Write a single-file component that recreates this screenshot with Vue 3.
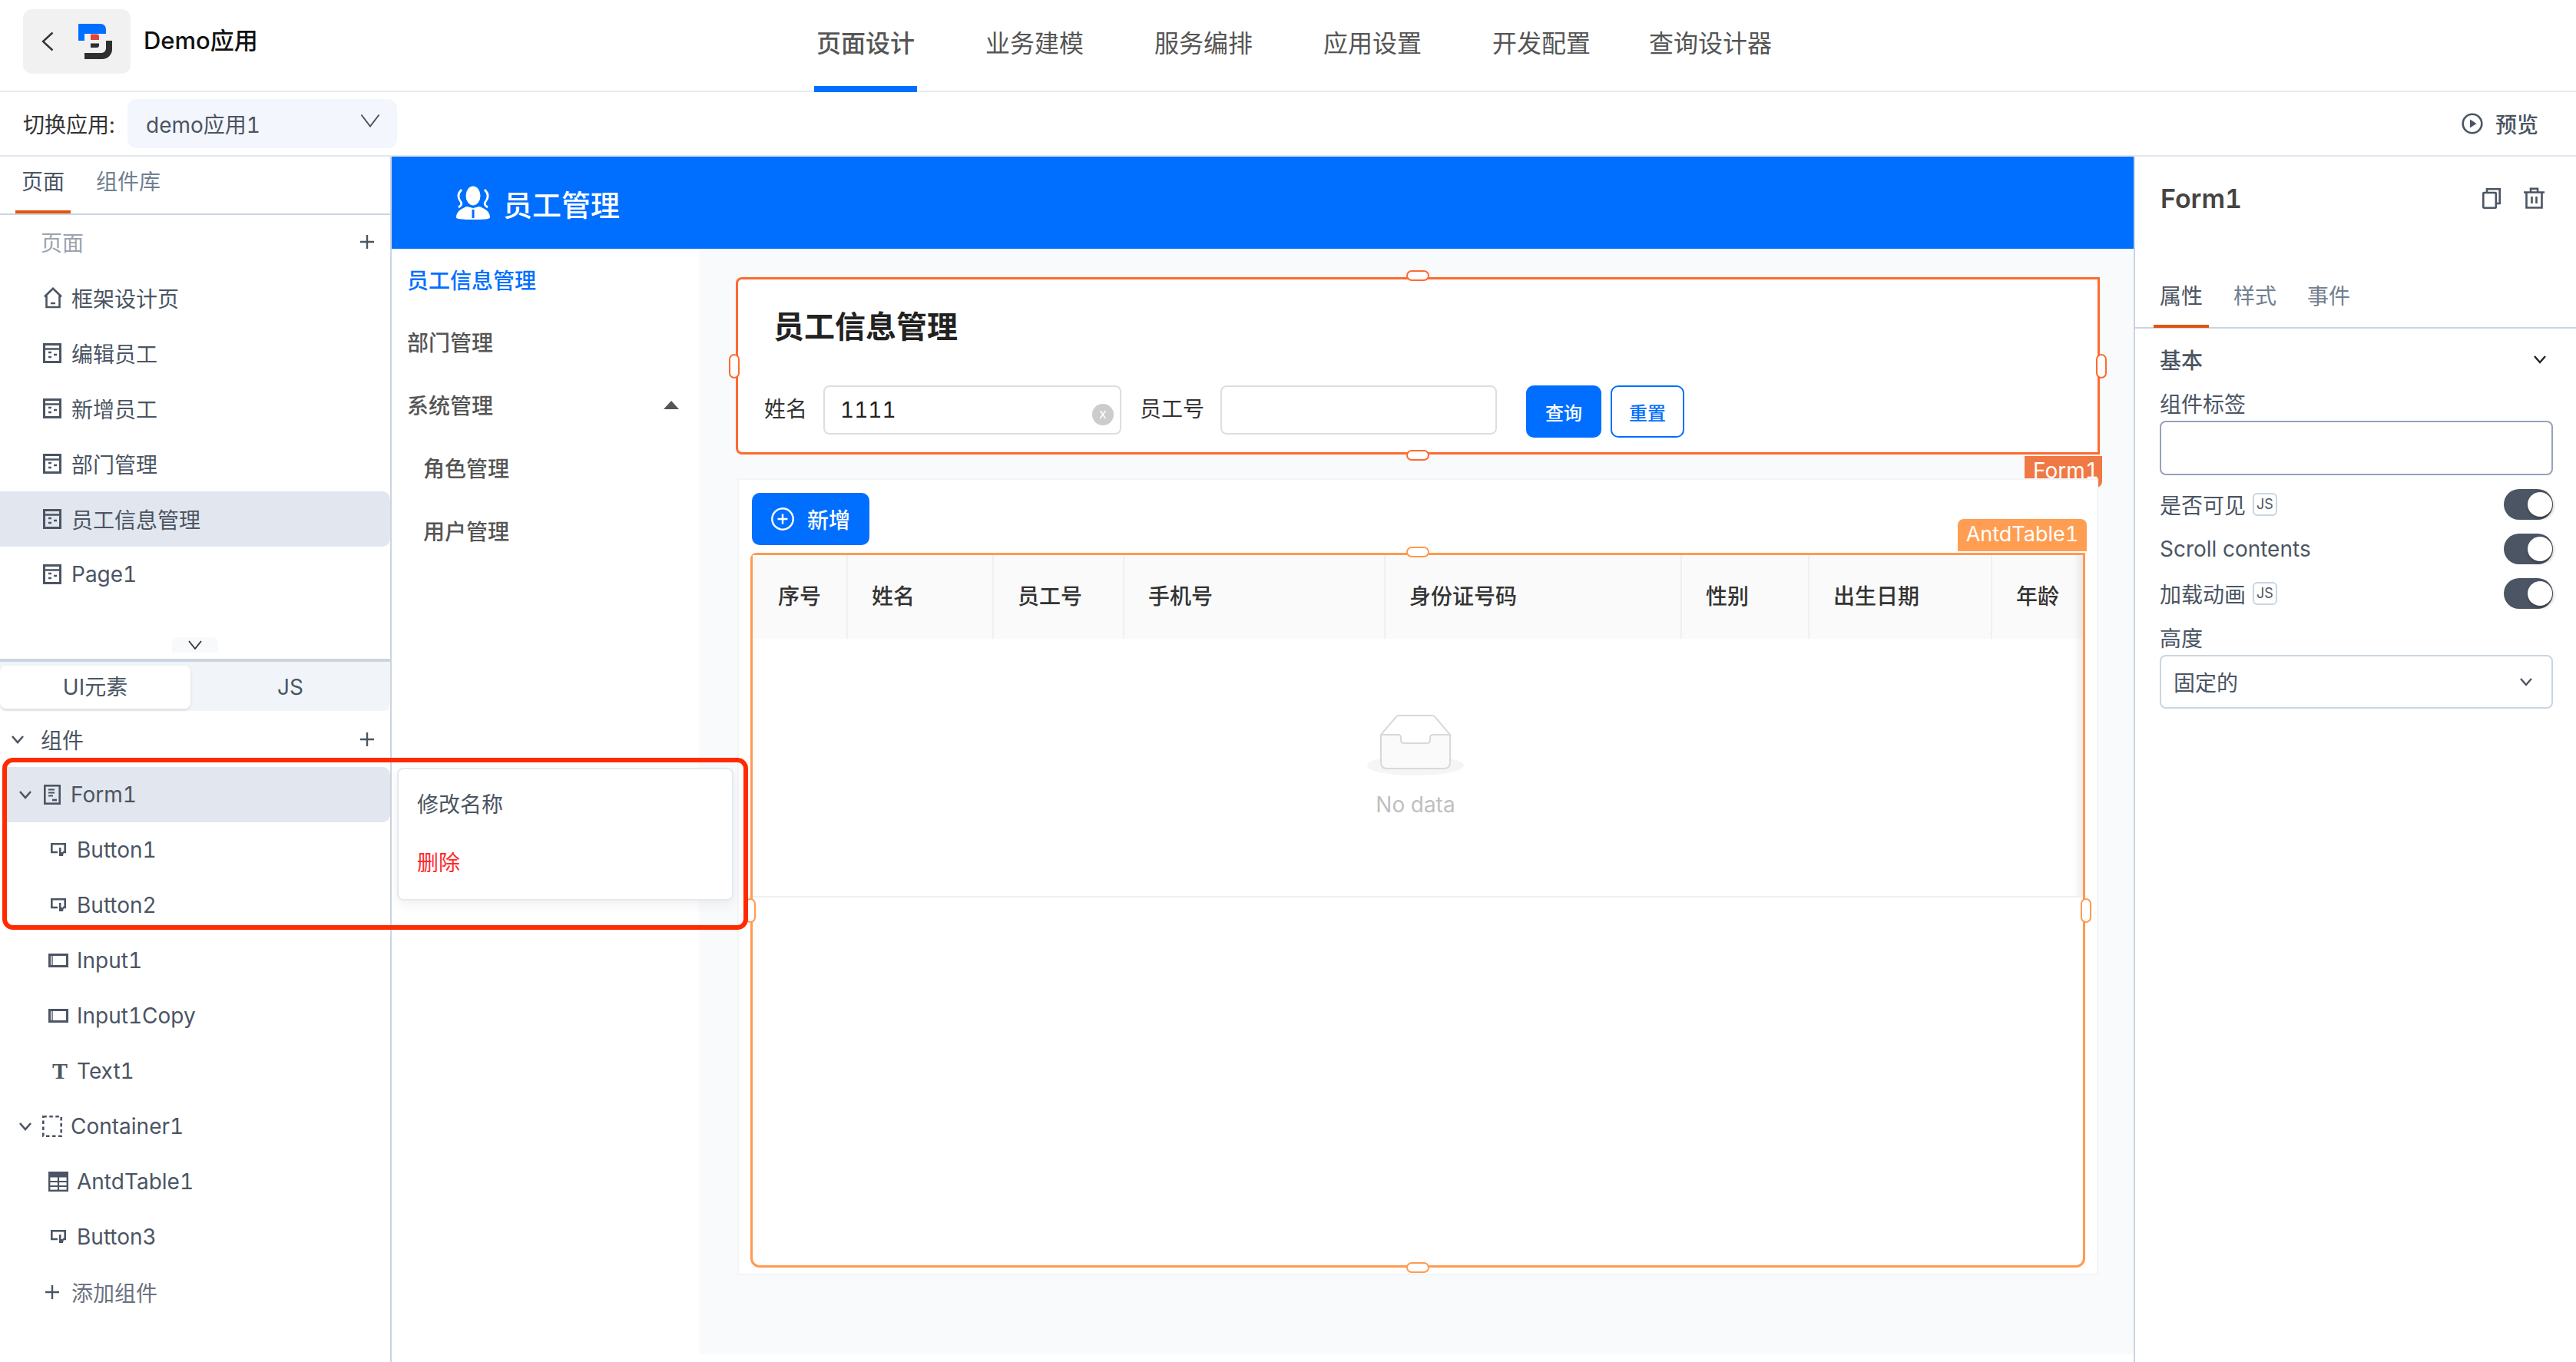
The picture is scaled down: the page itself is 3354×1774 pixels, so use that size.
<script setup>
const topTabs = ['页面设计', '业务建模', '服务编排', '应用设置', '开发配置', '查询设计器']

const pages = [
  { name: '框架设计页', icon: 'home' },
  { name: '编辑员工', icon: 'page' },
  { name: '新增员工', icon: 'page' },
  { name: '部门管理', icon: 'page' },
  { name: '员工信息管理', icon: 'page', active: true },
  { name: 'Page1', icon: 'page' },
]

// parent rows carry a chevron, children are indented one step
const nodes = [
  { name: 'Form1', icon: 'form', parent: true, active: true },
  { name: 'Button1', icon: 'button' },
  { name: 'Button2', icon: 'button' },
  { name: 'Input1', icon: 'input' },
  { name: 'Input1Copy', icon: 'input' },
  { name: 'Text1', icon: 'text' },
  { name: 'Container1', icon: 'container', parent: true },
  { name: 'AntdTable1', icon: 'table' },
  { name: 'Button3', icon: 'button' },
]

const columns = ['序号', '姓名', '员工号', '手机号', '身份证号码', '性别', '出生日期', '年龄']

const switches = [
  { label: '是否可见', js: true },
  { label: 'Scroll contents', js: false },
  { label: '加载动画', js: true },
]
</script>

<template>
  <div class="page">
    <header class="topbar">
      <div class="brand-box">
        <svg class="back" width="16" height="26" viewBox="0 0 16 26"><path d="M14.5 1.5L2 13l12.5 11.5" fill="none" stroke="#333" stroke-width="2.4" /></svg>
        <svg class="logo" width="44" height="46" viewBox="0 0 44 46">
          <path d="M0 0H29a7 7 0 0 1 7 7v6H8v9H0z" fill="#006fff" />
          <path d="M36 22h8v11a13 13 0 0 1-13 13H8v-8h22a6 6 0 0 0 6-6z" fill="#2f2f2f" />
          <path d="M16 13.5h8a3 3 0 0 1 3 3v4.500H16z" fill="#e0443a" />
          <path d="M16 25.500h11v2.500a3 3 0 0 1-3 3h-8z" fill="#2f2f2f" />
        </svg>
      </div>
      <div class="brand-name">Demo应用</div>
      <nav class="top-tabs">
        <div v-for="(tab, i) in topTabs" :key="tab" class="top-tab" :class="{ on: i === 0 }">{{ tab }}</div>
      </nav>
    </header>

    <div class="toolbar">
      <span class="switch-label">切换应用:</span>
      <div class="app-select">
        <span>demo应用1</span>
        <svg width="26" height="18" viewBox="0 0 26 18"><path d="M1.500 1.500L13 16.500 24.500 1.500" fill="none" stroke="#4b5563" stroke-width="2" /></svg>
      </div>
      <div class="preview">
        <svg width="28" height="28" viewBox="0 0 28 28"><circle cx="14" cy="14" r="12.300" fill="none" stroke="#4b5563" stroke-width="2.600" /><path d="M11 8.500L19.500 14 11 19.500z" fill="#4b5563" /></svg>
        <span>预览</span>
      </div>
    </div>

    <div class="main">
      <aside class="left">
        <div class="left-tabs">
          <div class="tab on">页面</div>
          <div class="tab">组件库</div>
        </div>
        <div class="page-list">
          <div class="section muted">
            <span>页面</span>
            <svg class="plus" width="20" height="20" viewBox="0 0 20 20"><path d="M10 1v18M1 10h18" stroke="#4b5563" stroke-width="2.400" /></svg>
          </div>
          <div v-for="p in pages" :key="p.name" class="row page-row" :class="{ active: p.active }">
            <span class="slot">
              <svg v-if="p.icon === 'home'" width="26" height="28" viewBox="0 0 26 28"><path d="M2 12.500L13 1.800 24 12.500M4.500 11v15h17V11M10 21h6" fill="none" stroke="#4b5563" stroke-width="2.600" /></svg>
              <svg v-else width="24" height="26" viewBox="0 0 24 26"><rect x="1.500" y="1.500" width="21" height="23" fill="none" stroke="#4b5563" stroke-width="3" /><path d="M2 7.500h20M7 12h4M7 18h4M14 15h4" stroke="#4b5563" stroke-width="2.600" /></svg>
            </span>
            <span>{{ p.name }}</span>
          </div>
          <div class="collapse">
            <svg width="18" height="12" viewBox="0 0 18 12"><path d="M1 1l8 10 8-10" fill="none" stroke="#333" stroke-width="1.800" /></svg>
          </div>
        </div>

        <div class="segment">
          <div class="seg on">UI元素</div>
          <div class="seg">JS</div>
        </div>

        <div class="section comp-head">
          <svg class="caret" width="18" height="12" viewBox="0 0 18 12"><path d="M2 2l7 8 7-8" fill="none" stroke="#4b5563" stroke-width="2.600" /></svg>
          <span>组件</span>
          <svg class="plus" width="20" height="20" viewBox="0 0 20 20"><path d="M10 1v18M1 10h18" stroke="#4b5563" stroke-width="2.400" /></svg>
        </div>

        <div
          v-for="n in nodes"
          :key="n.name"
          class="row tree-row"
          :class="{ active: n.active, parent: n.parent }"
        >
          <svg v-if="n.parent" class="caret" width="18" height="12" viewBox="0 0 18 12"><path d="M2 2l7 8 7-8" fill="none" stroke="#4b5563" stroke-width="2.600" /></svg>
          <span class="slot">
            <svg v-if="n.icon === 'form'" class="form-icon" width="22" height="26" viewBox="0 0 22 26"><rect x="1.300" y="1.300" width="19.400" height="23.400" fill="none" stroke="#4b5563" stroke-width="2.600" /><path d="M6 6.500h8M6 10.500h8M6 14.500h6" stroke="#4b5563" stroke-width="2" /><path d="M11 20h6" stroke="#4b5563" stroke-width="2.600" /></svg>
            <svg v-else-if="n.icon === 'button'" class="button-icon" width="20" height="18" viewBox="0 0 20 18"><path d="M9 12H1.300V1.300h17.400V12H16" fill="none" stroke="#4b5563" stroke-width="2.600" /><path d="M11 6h2.500v6H17l-1 5H11z" fill="#4b5563" /></svg>
            <svg v-else-if="n.icon === 'input'" width="26" height="18" viewBox="0 0 26 18"><rect x="1.500" y="1.500" width="23" height="15" fill="none" stroke="#4b5563" stroke-width="3" /><path d="M5 3v12" stroke="#4b5563" stroke-width="1.400" /></svg>
            <span v-else-if="n.icon === 'text'" class="t-glyph">T</span>
            <svg v-else-if="n.icon === 'container'" width="26" height="28" viewBox="0 0 26 28"><rect x="1.300" y="1.300" width="23.400" height="25.400" fill="none" stroke="#4b5563" stroke-width="2.600" stroke-dasharray="4.500 3.500" /></svg>
            <svg v-else width="26" height="26" viewBox="0 0 26 26"><rect x="1.200" y="1.200" width="23.600" height="23.600" fill="none" stroke="#4b5563" stroke-width="2.400" /><path d="M1 4.500h24" stroke="#4b5563" stroke-width="6" /><path d="M1 13h24M1 19h24M13 7v18" stroke="#4b5563" stroke-width="2.200" /></svg>
          </span>
          <span>{{ n.name }}</span>
        </div>

        <div class="row add-row">
          <svg width="20" height="20" viewBox="0 0 20 20"><path d="M10 1v18M1 10h18" stroke="#4b5563" stroke-width="2.400" /></svg>
          <span>添加组件</span>
        </div>
      </aside>

      <section class="design">
        <div class="app-head">
          <svg width="46" height="44" viewBox="0 0 46 44">
            <ellipse cx="23" cy="13" rx="9.500" ry="12.500" fill="#fff" />
            <path d="M1 41c0-8 8-12 14-14l8 2 8-2c6 2 14 6 14 14 0 2-3 3-22 3S1 43 1 41z" fill="#fff" />
            <path d="M8 5C2 11 3 16 7 21c2 3 0 5-3 7M38 5c6 6 5 11 1 16-2 3 0 5 3 7" fill="none" stroke="#fff" stroke-width="2.800" />
            <path d="M23 31v11" stroke="#006fff" stroke-width="3" />
          </svg>
          <span>员工管理</span>
        </div>
        <div class="app-body">
          <div class="app-menu">
            <div class="menu-item on">员工信息管理</div>
            <div class="menu-item">部门管理</div>
            <div class="menu-item has-arrow">系统管理<i class="arrow-up"></i></div>
            <div class="menu-item sub">角色管理</div>
            <div class="menu-item sub">用户管理</div>
          </div>

          <div class="canvas">
            <div class="form-box">
              <i class="handle top"></i>
              <i class="handle bottom"></i>
              <i class="handle left-h"></i>
              <i class="handle right-h"></i>
              <div class="form-title">员工信息管理</div>
              <div class="form-row">
                <span class="f-label">姓名</span>
                <div class="f-input first-input">
                  <span>1111</span>
                  <i class="clear">x</i>
                </div>
                <span class="f-label second">员工号</span>
                <div class="f-input second-input"></div>
                <button class="btn-query">查询</button>
                <button class="btn-reset">重置</button>
              </div>
              <div class="form-tag">Form1</div>
            </div>

            <div class="card">
              <button class="btn-add">
                <svg width="30" height="30" viewBox="0 0 30 30"><circle cx="15" cy="15" r="13.700" fill="none" stroke="#fff" stroke-width="2.400" /><path d="M15 8.500v13M8.500 15h13" stroke="#fff" stroke-width="2.400" /></svg>
                <span>新增</span>
              </button>
              <div class="table-box">
                <i class="handle top"></i>
                <i class="handle bottom"></i>
                <i class="handle left-h"></i>
                <i class="handle right-h"></i>
                <div class="table-tag">AntdTable1</div>
                <div class="table">
                  <div class="t-head">
                    <div v-for="c in columns" :key="c" class="th">{{ c }}</div>
                  </div>
                  <div class="t-body">
                    <svg width="126" height="80" viewBox="0 0 126 80">
                      <ellipse cx="63" cy="66" rx="63" ry="13" fill="#f5f5f5" />
                      <path d="M18 26L38 2.500Q39 1 41 1H85Q87 1 88 2.500L108 26" fill="#fff" stroke="#d9d9d9" stroke-width="2" />
                      <path d="M18 26H40Q44 26 44 30V33Q44 37 48 37H78Q82 37 82 33V30Q82 26 86 26H108V62Q108 70 100 70H26Q18 70 18 62Z" fill="#fafafa" stroke="#d9d9d9" stroke-width="2" />
                    </svg>
                    <div class="no-data">No data</div>
                  </div>
                  <div class="t-shadow"></div>
                </div>
              </div>
            </div>
          </div>
        </div>
      </section>

      <aside class="right">
        <div class="right-head">
          <span class="right-title">Form1</span>
          <svg width="24" height="28" viewBox="0 0 24 28"><rect x="1.300" y="7" width="16.500" height="19.700" rx="1" fill="none" stroke="#4b5563" stroke-width="2.600" /><path d="M6 7V2.300h16.700V21h-4.900" fill="none" stroke="#4b5563" stroke-width="2.600" /></svg>
          <svg width="27" height="28" viewBox="0 0 27 28"><path d="M0 6.500h27M9 6.500V1.800h9v4.700M3.500 6.500v20h20v-20M10.500 12v9M16.500 12v9" fill="none" stroke="#4b5563" stroke-width="2.600" /></svg>
        </div>
        <div class="right-tabs">
          <div class="tab on">属性</div>
          <div class="tab">样式</div>
          <div class="tab">事件</div>
        </div>
        <div class="props">
          <div class="prop-group">
            <span>基本</span>
            <svg width="18" height="12" viewBox="0 0 18 12"><path d="M2 2l7 8 7-8" fill="none" stroke="#222" stroke-width="2.400" /></svg>
          </div>
          <div class="prop-label">组件标签</div>
          <div class="prop-input"></div>
          <div class="switch-list">
            <div v-for="s in switches" :key="s.label" class="switch-row">
              <span>{{ s.label }}</span>
              <span v-if="s.js" class="js-badge">JS</span>
              <span class="toggle"><i></i></span>
            </div>
          </div>
          <div class="prop-label height-label">高度</div>
          <div class="prop-select">
            <span>固定的</span>
            <svg width="18" height="12" viewBox="0 0 18 12"><path d="M2 2l7 8 7-8" fill="none" stroke="#4b5563" stroke-width="2.400" /></svg>
          </div>
        </div>
      </aside>
    </div>

    <!-- row context menu and the red annotation drawn over the screenshot -->
    <div class="context-menu">
      <div class="ctx-item">修改名称</div>
      <div class="ctx-item danger">删除</div>
    </div>
    <div class="annotation"></div>
  </div>
</template>

<style scoped>
.page {
  position: relative;
  display: flex;
  flex-direction: column;
  width: 3354px;
  height: 1774px;
  overflow: hidden;
  background: #fff;
  color: #4b5563;
  font-family: Inter, "Noto Sans CJK SC", sans-serif;
  font-size: 28px;
  font-variant-numeric: tabular-nums;
}

.topbar {
  display: flex;
  flex: none;
  box-sizing: border-box;
  height: 120px;
  padding: 12px 0 0 30px;
  border-bottom: 2px solid #e8ebee;
}
.brand-box {
  display: flex;
  flex: none;
  width: 140px;
  height: 84px;
  box-sizing: border-box;
  padding: 16px 0 0 24px;
  border-radius: 12px;
  background: #f1f1f1;
}
.back {
  margin-top: 13px;
}
.logo {
  margin: 3px 0 0 32px;
}
.brand-name {
  flex: none;
  width: 150px;
  margin: 21px 0 0 17px;
  color: #111;
  font-size: 31px;
  font-weight: 500;
  line-height: 40px;
  white-space: nowrap;
}
.top-tabs {
  display: flex;
  gap: 86px;
  margin-left: 723px;
}
.top-tab {
  box-sizing: border-box;
  height: 108px;
  padding: 21px 3px 0;
  color: #555;
  font-size: 32px;
  line-height: 48px;
  white-space: nowrap;
}
.top-tab.on {
  border-bottom: 8px solid #006fff;
  font-weight: 500;
}
.top-tab:last-child {
  margin-left: -16px;
}

.toolbar {
  display: flex;
  flex: none;
  align-items: center;
  box-sizing: border-box;
  height: 84px;
  padding: 0 49px 0 30px;
  border-bottom: 2px solid #e2e8f0;
  color: #333;
}
.switch-label {
  width: 136px;
  white-space: nowrap;
}
.app-select {
  display: flex;
  align-items: center;
  justify-content: space-between;
  box-sizing: border-box;
  width: 351px;
  height: 64px;
  padding: 0 22px 8px 24px;
  border-radius: 12px;
  background: #f3f6fd;
  color: #4b5563;
}
.app-select span {
  margin-top: 8px;
}
.preview {
  display: flex;
  align-items: center;
  gap: 16px;
  margin-left: auto;
  color: #4b5563;
  font-weight: 500;
}

.main {
  display: flex;
  flex: 1;
  min-height: 0;
}

.left {
  flex: none;
  box-sizing: border-box;
  width: 510px;
  border-right: 2px solid #cbd5e1;
}
.left-tabs {
  display: flex;
  gap: 25px;
  box-sizing: border-box;
  height: 76px;
  padding: 0 0 0 20px;
  border-bottom: 2px solid #cbd5e1;
}
.tab {
  box-sizing: border-box;
  height: 74px;
  padding: 13px 8px 0;
  border-bottom: 4px solid transparent;
  color: #708090;
  line-height: 40px;
}
.tab.on {
  border-bottom-color: #e2540f;
  color: #4b5563;
}

.page-list {
  display: flex;
  flex-direction: column;
  box-sizing: border-box;
  height: 582px;
  border-bottom: 4px solid #cbd5e1;
}
.section {
  display: flex;
  flex: none;
  align-items: center;
  box-sizing: border-box;
  height: 72px;
  padding: 0 20px 0 53px;
}
.section.muted {
  padding-bottom: 2px;
  color: #9ca3af;
}
.plus {
  margin-left: auto;
}
.row {
  display: flex;
  flex: none;
  align-items: center;
  box-sizing: border-box;
  height: 72px;
  white-space: nowrap;
}
.row.active {
  border-radius: 0 10px 10px 0;
  background: #e2e6ee;
}
.page-row {
  padding-bottom: 1px;
  padding-left: 56px;
}
.slot {
  display: flex;
  flex: none;
  align-items: center;
  width: 37px;
}
.collapse {
  display: flex;
  flex: none;
  align-items: center;
  justify-content: center;
  align-self: center;
  width: 60px;
  height: 20px;
  margin-top: 46px;
  border-radius: 8px 8px 0 0;
  background: #f8f9fb;
}

.segment {
  display: flex;
  box-sizing: border-box;
  width: 508px;
  height: 64px;
  padding: 5px 0 3px;
  border-radius: 0 0 8px 8px;
  background: #f1f5f9;
}
.seg {
  flex: 1;
  color: #4b5563;
  line-height: 56px;
  text-align: center;
}
.seg.on {
  flex: none;
  width: 248px;
  border-radius: 8px;
  background: #fff;
  box-shadow: 0 2px 4px rgba(0, 0, 0, 0.1);
}

.comp-head {
  height: 73px;
  padding-left: 14px;
}
.comp-head .caret {
  margin-right: 21px;
}
.tree-row {
  padding-left: 63px;
}
.tree-row.parent {
  padding-left: 24px;
}
.tree-row.active {
  margin-left: 8px;
  padding-left: 16px;
}
.caret {
  flex: none;
}
.tree-row .caret {
  margin-right: 13px;
}
.form-icon {
  margin-left: 2px;
}
.button-icon {
  margin-left: 3px;
}
.t-glyph {
  width: 24px;
  margin-left: 3px;
  font-family: "Liberation Serif", serif;
  font-size: 30px;
  font-weight: 700;
  line-height: 30px;
  text-align: center;
}
.add-row {
  gap: 15px;
  padding-left: 58px;
  color: #6b7280;
}

.design {
  display: flex;
  flex: none;
  flex-direction: column;
  width: 2268px;
}
.app-head {
  display: flex;
  flex: none;
  align-items: center;
  gap: 16px;
  height: 120px;
  padding-left: 83px;
  background: #006fff;
  color: #fff;
  font-size: 38px;
  font-weight: 500;
}
.app-body {
  display: flex;
  flex: 1;
  min-height: 0;
}
.app-menu {
  flex: none;
  box-sizing: border-box;
  width: 400px;
}
.menu-item {
  display: flex;
  align-items: center;
  height: 82px;
  padding-left: 20px;
  color: #555;
  font-weight: 500;
}
.menu-item.on {
  height: 80px;
  color: #006fff;
}
.menu-item.sub {
  padding-left: 41px;
}
.arrow-up {
  width: 0;
  height: 0;
  margin-left: 222px;
  border-right: 10px solid transparent;
  border-bottom: 11px solid #555;
  border-left: 10px solid transparent;
}
.canvas {
  flex: 1;
  box-sizing: border-box;
  height: 1440px;
  padding: 37px 0 0 48px;
  background: #f8fafc;
}

.form-box {
  position: relative;
  box-sizing: border-box;
  width: 1776px;
  height: 231px;
  padding: 34px 0 0 34px;
  border: 3px solid #ff6a2f;
  border-radius: 8px 0 0 8px;
  background: #fff;
  color: #333;
}
.handle {
  position: absolute;
  z-index: 2;
  box-sizing: border-box;
  border: 2px solid #ff6a2f;
  border-radius: 7px;
  background: #fff;
}
.handle.top,
.handle.bottom {
  left: 50%;
  width: 30px;
  height: 14px;
  transform: translateX(-50%);
}
.handle.top {
  top: -12px;
}
.handle.bottom {
  bottom: -11px;
}
.handle.left-h,
.handle.right-h {
  top: 50%;
  width: 14px;
  height: 32px;
  transform: translateY(-50%);
}
.handle.left-h {
  left: -12px;
}
.handle.right-h {
  right: -12px;
}
.form-title {
  margin-left: 12px;
  color: #222;
  font-size: 40px;
  font-weight: 600;
  line-height: 56px;
}
.form-row {
  display: flex;
  align-items: flex-start;
  margin-top: 48px;
}
.f-label {
  line-height: 62px;
  white-space: nowrap;
}
.f-label.second {
  margin-left: 24px;
}
.f-input {
  display: flex;
  align-items: center;
  justify-content: space-between;
  box-sizing: border-box;
  height: 64px;
  margin-left: 21px;
  padding: 0 8px 0 20px;
  border: 2px solid #dedede;
  border-radius: 8px;
  color: #222;
}
.first-input {
  width: 388px;
}
.second-input {
  width: 360px;
}
.clear {
  display: block;
  width: 28px;
  height: 28px;
  margin-top: 12px;
  border-radius: 50%;
  background: #ccc;
  color: #fff;
  font-size: 18px;
  font-style: normal;
  line-height: 26px;
  text-align: center;
}
.btn-query,
.btn-reset {
  box-sizing: border-box;
  height: 68px;
  padding: 0;
  border-radius: 10px;
  font-family: inherit;
  font-size: 24px;
  font-weight: 500;
}
.btn-query {
  width: 98px;
  margin-left: 38px;
  border: 0;
  background: #006fff;
  color: #fff;
}
.btn-reset {
  width: 96px;
  margin-left: 12px;
  border: 2px solid #006fff;
  background: #fff;
  color: #006fff;
}
.form-tag {
  position: absolute;
  top: calc(100% + 5px);
  right: -6px;
  box-sizing: border-box;
  width: 101px;
  height: 41px;
  padding-left: 11px;
  border-radius: 0 0 8px 0;
  background: #f07844;
  color: #fff;
  font-size: 28px;
  line-height: 38px;
}

.card {
  position: relative;
  z-index: 1;
  box-sizing: border-box;
  width: 1772px;
  height: 1038px;
  margin: 31px 0 0 2px;
  padding: 17px 0 0 17px;
  border: 2px solid #f3f4f6;
  background: #fff;
}
.btn-add {
  display: flex;
  align-items: center;
  gap: 17px;
  box-sizing: border-box;
  width: 153px;
  height: 68px;
  padding: 0 0 0 25px;
  border: 0;
  border-radius: 10px;
  background: #006fff;
  color: #fff;
  font-family: inherit;
  font-size: 28px;
  font-weight: 500;
}
.table-box {
  position: relative;
  box-sizing: border-box;
  width: 1738px;
  height: 931px;
  margin: 10px 0 0 -2px;
  border: 3px solid #ff9a4f;
  border-radius: 8px 0 12px 12px;
}
.table-box .handle {
  border-color: #ff9a4f;
}
.table-box .handle.top {
  top: -11px;
}
.table-box .handle.bottom {
  bottom: -10px;
}
.table-box .handle.left-h {
  left: -10px;
}
.table-box .handle.right-h {
  right: -11px;
}
.table-tag {
  position: absolute;
  top: -47px;
  right: -5px;
  width: 168px;
  height: 42px;
  border-radius: 8px 8px 0 0;
  background: #ff9e52;
  color: #fff;
  font-size: 27px;
  line-height: 40px;
  text-align: center;
  white-space: nowrap;
}
.table {
  position: relative;
  border-bottom: 2px solid #f0f0f0;
}
.t-head {
  display: grid;
  grid-template-columns: 122px 190px 170px 340px 386px 166px 238px 120px;
  height: 109px;
  background: #fafafa;
}
.th {
  box-sizing: border-box;
  padding-left: 31px;
  border-left: 2px solid #f0f0f0;
  color: #333;
  font-weight: 500;
  line-height: 109px;
  white-space: nowrap;
}
.th:first-child {
  padding-left: 33px;
  border-left: 0;
}
.t-body {
  box-sizing: border-box;
  height: 335px;
  padding: 99px 6px 0 0;
  text-align: center;
}
.t-body svg {
  display: block;
  margin: 0 auto;
}
.no-data {
  margin-top: 17px;
  color: #bfbfbf;
  line-height: 40px;
}
.t-shadow {
  position: absolute;
  top: 0;
  right: 0;
  width: 12px;
  height: 100%;
  background: linear-gradient(to right, rgba(0, 0, 0, 0), rgba(0, 0, 0, 0.07));
}

.right {
  flex: none;
  box-sizing: border-box;
  width: 576px;
  border-left: 2px solid #cbd5e1;
}
.right-head {
  display: flex;
  align-items: center;
  gap: 30px;
  height: 108px;
  padding: 0 41px 0 33px;
}
.right-title {
  margin-right: auto;
  color: #444;
  font-size: 34px;
  font-weight: 600;
}
.right-tabs {
  display: flex;
  gap: 24px;
  box-sizing: border-box;
  height: 116px;
  padding: 41px 0 0 24px;
  border-bottom: 2px solid #cbd5e1;
}
.props {
  padding: 0 30px 0 32px;
}
.prop-group {
  display: flex;
  align-items: center;
  justify-content: space-between;
  height: 79px;
  padding-right: 8px;
  font-weight: 500;
}
.prop-label {
  line-height: 40px;
}
.prop-input {
  box-sizing: border-box;
  height: 71px;
  margin-top: 1px;
  border: 2px solid #94a3b8;
  border-radius: 8px;
}
.switch-list {
  margin-top: 9px;
}
.switch-row {
  display: flex;
  align-items: center;
  height: 58px;
}
.js-badge {
  box-sizing: border-box;
  width: 32px;
  height: 30px;
  margin-left: 9px;
  border: 2px solid #cbd5e1;
  border-radius: 6px;
  font-size: 18px;
  line-height: 26px;
  text-align: center;
}
.toggle {
  position: relative;
  width: 64px;
  height: 40px;
  margin-left: auto;
  border-radius: 20px;
  background: #4b5563;
}
.toggle i {
  position: absolute;
  top: 4px;
  right: 1px;
  width: 32px;
  height: 32px;
  border-radius: 50%;
  background: #fff;
  box-shadow: 1px 2px 4px rgba(0, 0, 0, 0.35);
}
.height-label {
  margin-top: 10px;
}
.prop-select {
  display: flex;
  align-items: center;
  justify-content: space-between;
  box-sizing: border-box;
  height: 70px;
  margin-top: 1px;
  padding: 0 24px 0 16px;
  border: 2px solid #cbd5e1;
  border-radius: 8px;
}

.context-menu {
  position: absolute;
  top: 1000px;
  left: 517px;
  z-index: 9;
  box-sizing: border-box;
  width: 438px;
  height: 173px;
  padding: 8px 0 0 24px;
  border: 2px solid #e5e9ef;
  border-radius: 8px;
  background: #fff;
  box-shadow: 0 6px 16px rgba(0, 0, 0, 0.06);
}
.ctx-item {
  height: 76px;
  color: #4b5563;
  line-height: 76px;
}
.ctx-item.danger {
  color: #ff2a2a;
}
.annotation {
  position: absolute;
  top: 987px;
  left: 3px;
  z-index: 10;
  box-sizing: border-box;
  width: 971px;
  height: 224px;
  border: 6px solid #ff2a00;
  border-radius: 14px;
  pointer-events: none;
}
</style>

<style>
html,
body {
  margin: 0;
  background: #fff;
}
</style>
